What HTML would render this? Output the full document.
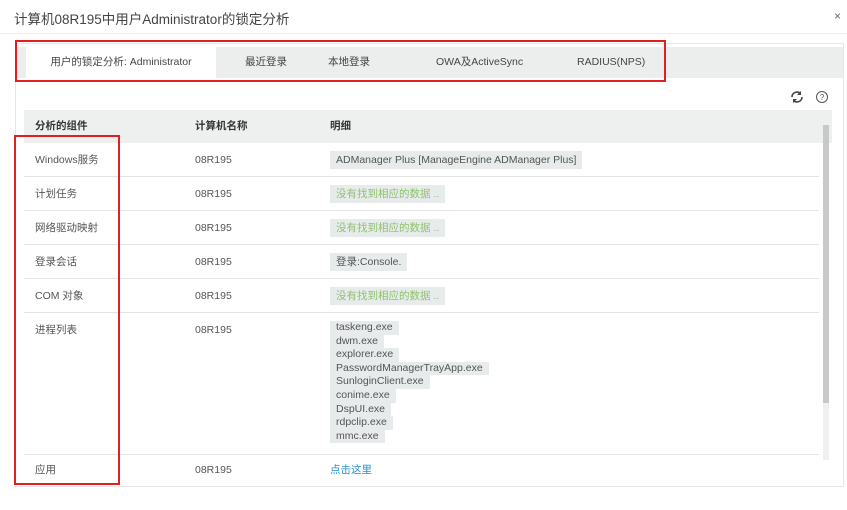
<!DOCTYPE html>
<html><head><meta charset="utf-8"><style>
*{margin:0;padding:0;box-sizing:border-box}
body{width:847px;height:510px;background:#fff;font-family:"Liberation Sans","Noto Sans CJK SC",sans-serif;color:#333;position:relative;overflow:hidden;font-size:11px}
.a{position:absolute}
.title{left:14px;top:8px;font-size:13.5px;color:#444}
.close{left:834px;top:9px;font-size:12px;color:#666}
.hline{left:0;top:33px;width:847px;height:1px;background:#eee}
.panel{left:15px;top:43px;width:829px;height:444px;border:1px solid #e6e6e6}
.tabs{left:16px;top:47px;width:827px;height:31px;background:#eceeee}
.tab{position:absolute;top:0;height:31px;line-height:31px;font-size:10.5px;color:#444}
.act{background:#fff;left:10px;width:190px;text-align:center}
.red{border:2px solid #e02020}
.th{left:24px;top:110px;width:808px;height:33px;line-height:33px;background:#eef0f0;font-weight:bold;font-size:10.5px}
.row{left:24px;width:795px;border-bottom:1px solid #e4e4e4;font-size:10.5px;color:#555;line-height:34px}
.c1{position:absolute;left:11px;top:0}.c2{position:absolute;left:171px;top:0}.c3{position:absolute;left:306px;top:0}
.box{background:#e8ebeb;padding:2px 6px;display:inline-block;line-height:14px}
.g{color:#8ec26e}
.sb{left:823px;top:125px;width:6px;height:335px;background:#f0f0f0}
.th2{left:823px;top:125px;width:6px;height:278px;background:#c8c8c8}
</style></head><body>
<div class="a title">计算机08R195中用户Administrator的锁定分析</div>
<div class="a close">×</div>
<div class="a hline"></div>
<div class="a panel"></div>
<div class="a tabs">
<div class="tab act">用户的锁定分析: Administrator</div>
<div class="tab" style="left:229px">最近登录</div>
<div class="tab" style="left:312px">本地登录</div>
<div class="tab" style="left:420px">OWA及ActiveSync</div>
<div class="tab" style="left:561px">RADIUS(NPS)</div>
</div>
<div class="a red" style="left:15px;top:40px;width:651px;height:42px"></div>
<svg class="a" style="left:790px;top:90px" width="40" height="14" viewBox="0 0 40 14"><path d="M2 7a5 5 0 0 1 8.5-3.5M12 7a5 5 0 0 1-8.5 3.5" stroke="#444" stroke-width="1.6" fill="none"/><path d="M11 1v4h-4zM3 13v-4h4z" fill="#444"/><circle cx="32" cy="7" r="5.5" stroke="#555" fill="none"/><text x="32" y="10" font-size="8" text-anchor="middle" fill="#555" font-family="Liberation Sans">?</text></svg>
<div class="a th"><span class="c1">分析的组件</span><span class="c2">计算机名称</span><span class="c3">明细</span></div>
<div class="a row" style="top:143px;height:34px"><span class="c1">Windows服务</span><span class="c2">08R195</span><span class="c3"><span class="box">ADManager Plus [ManageEngine ADManager Plus]</span></span></div>
<div class="a row" style="top:177px;height:34px"><span class="c1">计划任务</span><span class="c2">08R195</span><span class="c3"><span class="box g">没有找到相应的数据 ..</span></span></div>
<div class="a row" style="top:211px;height:34px"><span class="c1">网络驱动映射</span><span class="c2">08R195</span><span class="c3"><span class="box g">没有找到相应的数据 ..</span></span></div>
<div class="a row" style="top:245px;height:34px"><span class="c1">登录会话</span><span class="c2">08R195</span><span class="c3"><span class="box">登录:Console.</span></span></div>
<div class="a row" style="top:279px;height:34px"><span class="c1">COM 对象</span><span class="c2">08R195</span><span class="c3"><span class="box g">没有找到相应的数据 ..</span></span></div>
<div class="a row" style="top:313px;height:142px"><span class="c1">进程列表</span><span class="c2">08R195</span>
<div class="c3" style="top:8px;line-height:13.6px"><span class="box" style="padding:0 6px;line-height:13.6px">taskeng.exe</span><br><span class="box" style="padding:0 6px;line-height:13.6px">dwm.exe</span><br><span class="box" style="padding:0 6px;line-height:13.6px">explorer.exe</span><br><span class="box" style="padding:0 6px;line-height:13.6px">PasswordManagerTrayApp.exe</span><br><span class="box" style="padding:0 6px;line-height:13.6px">SunloginClient.exe</span><br><span class="box" style="padding:0 6px;line-height:13.6px">conime.exe</span><br><span class="box" style="padding:0 6px;line-height:13.6px">DspUI.exe</span><br><span class="box" style="padding:0 6px;line-height:13.6px">rdpclip.exe</span><br><span class="box" style="padding:0 6px;line-height:13.6px">mmc.exe</span></div></div>
<div class="a row" style="top:455px;height:31px;line-height:31px;border:none"><span class="c1">应用</span><span class="c2">08R195</span><span class="c3" style="color:#2a8fd0">点击这里</span></div>
<div class="a sb"></div><div class="a th2"></div>
<div class="a red" style="left:14px;top:135px;width:106px;height:350px"></div>
</body></html>
